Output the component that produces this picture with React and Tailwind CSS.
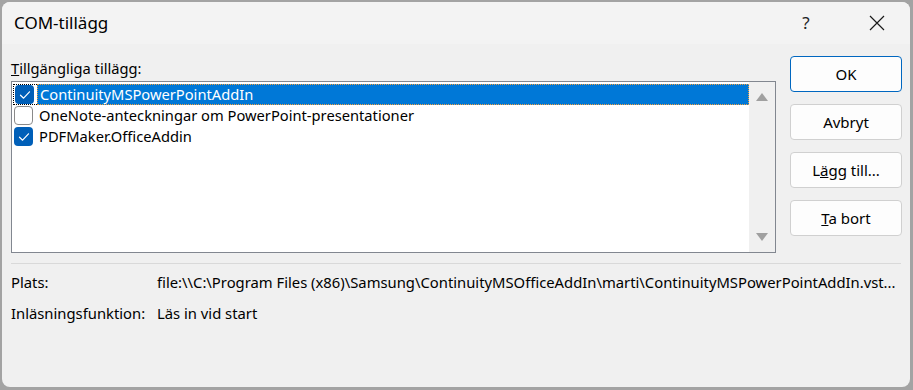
import React from 'react';

const font = { fontFamily: '"Noto Sans", "Open Sans", sans-serif' };

const Check = () => (
  <svg width="12" height="10" viewBox="0 0 12 10" fill="none">
    <path d="M1.5 5.2 L4.6 8.2 L10.5 1.8" stroke="white" strokeWidth="1.2" strokeLinecap="round" strokeLinejoin="round" />
  </svg>
);

const Box = ({ checked }) =>
  checked ? (
    <div className="w-[19px] h-[19px] rounded-[4px] bg-[#005fb8] flex items-center justify-center shrink-0">
      <Check />
    </div>
  ) : (
    <div className="w-[19px] h-[19px] rounded-[4px] bg-white border border-[#8a8a8a] shrink-0" />
  );

const addins = [
  { name: 'ContinuityMSPowerPointAddIn', checked: true, selected: true },
  { name: 'OneNote-anteckningar om PowerPoint-presentationer', checked: false },
  { name: 'PDFMaker.OfficeAddin', checked: true },
];

const buttons = [
  { label: 'OK', primary: true },
  { label: 'Avbryt' },
  { label: <>L<span className="underline">ä</span>gg till...</> },
  { label: <><span className="underline">T</span>a bort</> },
];

export default function App() {
  return (
    <div className="w-[913px] h-[390px] bg-[#a3a3a3] pt-[2px] pl-[2px] pr-[3px] pb-[3px]" style={font}>
      <div className="w-full h-full rounded-[8px] bg-[#f0f0f0] overflow-hidden flex flex-col text-black">
        {/* Titelrad */}
        <div className="h-[42px] bg-[#f3f3f3] flex items-center pl-[12px] shrink-0">
          <span className="text-[17px] flex-1">COM-tillägg</span>
          <span className="text-[17px] text-[#222] w-[20px] text-center mr-[53px]">?</span>
          <svg width="16" height="16" viewBox="0 0 16 16" className="mr-[25px]">
            <path d="M1 1 L15 15 M15 1 L1 15" stroke="#1a1a1a" strokeWidth="1.2" />
          </svg>
        </div>

        <div className="flex pl-[9px] pr-[8px]">
          {/* Lista */}
          <div className="flex-1">
            <div className="text-[14.7px] mt-[12px] h-[24px] leading-[24px]">
              <span className="underline">T</span>illgängliga tillägg:
            </div>
            <div className="w-[765px] h-[172px] border border-[#828790] bg-white flex mt-[1px]">
              <div className="flex-1 pt-[2px] pl-[1px]">
                {addins.map(a => (
                  <div key={a.name} className="h-[21px] flex items-center">
                    <div className={`h-[21px] w-[24px] flex items-center pl-[1px] ${a.selected ? 'border border-r-0 border-dotted border-black' : ''}`}>
                      <Box checked={a.checked} />
                    </div>
                    <div className={`h-[21px] flex-1 flex items-center pl-[2px] text-[14.7px] ${a.selected ? 'bg-[#0078d7] text-white border border-dotted border-[#f0a040]' : ''}`}>
                      {a.name}
                    </div>
                  </div>
                ))}
              </div>
              <div className="w-[26px] bg-[#f0f0f0] flex flex-col items-center justify-between py-[11px]">
                <svg width="12" height="8" viewBox="0 0 12 8"><path d="M6 0 L12 8 L0 8 Z" fill="#a0a0a0" /></svg>
                <svg width="12" height="8" viewBox="0 0 12 8"><path d="M0 0 L12 0 L6 8 Z" fill="#a0a0a0" /></svg>
              </div>
            </div>
          </div>

          {/* Knappar */}
          <div className="w-[112px] mt-[12px] flex flex-col gap-[12px] ml-[12px]">
            {buttons.map((b, i) => (
              <button
                key={i}
                className={`h-[36px] rounded-[4px] bg-[#fdfdfd] text-[15px] ${b.primary ? 'border border-[#0067c0]' : 'border border-[#d0d0d0]'}`}
              >
                {b.label}
              </button>
            ))}
          </div>
        </div>

        <div className="mx-[9px] mt-[10px] border-t border-[#d9d9d9]" />

        <div className="pl-[9px] text-[14.8px]">
          <div className="flex h-[31px] items-center mt-[3px]">
            <span className="w-[146px]">Plats:</span>
            <span className="whitespace-nowrap">file:\\C:\Program Files (x86)\Samsung\ContinuityMSOfficeAddIn\marti\ContinuityMSPowerPointAddIn.vst...</span>
          </div>
          <div className="flex h-[31px] items-center">
            <span className="w-[146px]">Inläsningsfunktion:</span>
            <span>Läs in vid start</span>
          </div>
        </div>
      </div>
    </div>
  );
}
